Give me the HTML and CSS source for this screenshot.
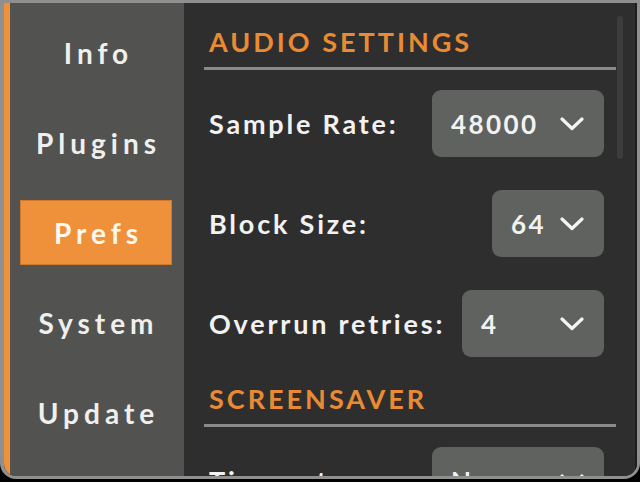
FILE: index.html
```html
<!DOCTYPE html>
<html>
<head>
<meta charset="utf-8">
<link rel="stylesheet" href="styles.css">
</head>
<body>
<div class="window">
  <nav class="sidebar">
    <div class="nav-item">Info</div>
    <div class="nav-item">Plugins</div>
    <div class="nav-item active">Prefs</div>
    <div class="nav-item">System</div>
    <div class="nav-item">Update</div>
  </nav>
  <main class="panel">
    <div class="scrollbar"></div>
    <section class="section">
      <h2 class="section-title">AUDIO SETTINGS</h2>
      <div class="rows">
        <div class="row">
          <span class="label">Sample Rate:</span>
          <div class="select w-rate"><span>48000</span><svg class="chev" viewBox="0 0 24 14"><path d="M2 2 L12 11.5 L22 2"/></svg></div>
        </div>
        <div class="row">
          <span class="label">Block Size:</span>
          <div class="select w-block"><span>64</span><svg class="chev" viewBox="0 0 24 14"><path d="M2 2 L12 11.5 L22 2"/></svg></div>
        </div>
        <div class="row">
          <span class="label">Overrun retries:</span>
          <div class="select w-retry"><span>4</span><svg class="chev" viewBox="0 0 24 14"><path d="M2 2 L12 11.5 L22 2"/></svg></div>
        </div>
      </div>
    </section>
    <section class="section second">
      <h2 class="section-title">SCREENSAVER</h2>
      <div class="rows">
        <div class="row">
          <span class="label">Timeout:</span>
          <div class="select w-rate"><span>Never</span><svg class="chev" viewBox="0 0 24 14"><path d="M2 2 L12 11.5 L22 2"/></svg></div>
        </div>
      </div>
    </section>
  </main>
</div>
</body>
</html>
```
FILE: styles.css
```css
* { box-sizing: border-box; }
html, body {
  margin: 0;
  padding: 0;
  background: #000;
}
body {
  width: 640px;
  height: 482px;
  font-family: "Lato", "Open Sans", sans-serif;
  font-weight: 700;
  color: #f2f2f2;
}
.window {
  width: 640px;
  height: 479px;
  display: flex;
  border: 3px solid #8f8f8f;
  border-left-width: 4px;
  border-radius: 0 0 16px 16px;
  overflow: hidden;
  background: #2e2e2e;
}
.sidebar {
  width: 180px;
  flex: none;
  background: #525351;
  border-left: 6px solid #ef903a;
  padding: 17px 12px 0 10px;
  display: flex;
  flex-direction: column;
  gap: 25px;
}
.nav-item {
  height: 65px;
  width: 152px;
  flex: none;
  display: flex;
  align-items: center;
  justify-content: center;
  font-size: 28px;
  letter-spacing: 5px;
  padding-left: 5px;
  color: #efefed;
}
.nav-item.active {
  background: #ef913b;
  border: 1px solid #d27a2c;
  color: #fff8ef;
}
.panel {
  flex: 1;
  position: relative;
  background: #2e2e2e;
  padding: 24px 0 0 20px;
  overflow: hidden;
  border-right: 2px solid #1f1f1f;
}
.scrollbar {
  position: absolute;
  left: 433px;
  top: 13px;
  width: 6px;
  height: 143px;
  border-radius: 3px;
  background: #3d3e3c;
}
.section {
  width: 412px;
}
.section.second {
  margin-top: 27px;
}
.section-title {
  margin: 0;
  font-size: 27px;
  line-height: 30px;
  font-weight: 700;
  letter-spacing: 3px;
  color: #ea8b33;
  padding: 0 0 10px 5px;
  border-bottom: 3px solid #8a8a8a;
}
.rows {
  margin-top: 20px;
  display: flex;
  flex-direction: column;
  gap: 33px;
}
.row {
  height: 67px;
  display: flex;
  align-items: center;
  justify-content: space-between;
  padding: 0 12px 0 5px;
}
.label {
  font-size: 27px;
  letter-spacing: 2.8px;
  color: #f2f2f2;
}
.select {
  height: 67px;
  border-radius: 9px;
  background: #60625f;
  display: flex;
  align-items: center;
  justify-content: space-between;
  padding: 0 20px 0 19px;
  font-size: 26px;
  letter-spacing: 2.4px;
  color: #f2f2f2;
}
.w-rate { width: 172px; }
.w-block { width: 112px; }
.w-retry { width: 142px; }
.chev {
  width: 24px;
  height: 14px;
  flex: none;
  fill: none;
  stroke: #f4f4f4;
  stroke-width: 3.2;
  stroke-linecap: round;
  stroke-linejoin: round;
}
```
